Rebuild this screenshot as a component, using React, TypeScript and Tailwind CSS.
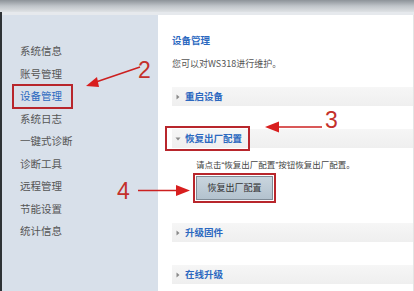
import React from "react";

const cjk = { fontFamily: '"Noto Sans CJK SC", "Noto Sans", sans-serif' };
const latin = { fontFamily: '"Liberation Sans", sans-serif' };

function Tri({ open }: { open?: boolean }) {
  return open ? (
    <svg width="6" height="6" viewBox="0 0 6 6" className="shrink-0">
      <path d="M0.5 1.5 L5.5 1.5 L3 4.5 Z" fill="#8a8a8a" />
    </svg>
  ) : (
    <svg width="6" height="6" viewBox="0 0 6 6" className="shrink-0">
      <path d="M1.5 0.5 L4.5 3 L1.5 5.5 Z" fill="#8a8a8a" />
    </svg>
  );
}

function Bar({ label, open, boxed }: { label: string; open?: boolean; boxed?: boolean }) {
  return (
    <div className="relative flex h-[19px] items-center gap-[4px] bg-gradient-to-b from-[#f6f6f6] to-[#efefef] pl-[3px]">
      <Tri open={open} />
      <span className="text-[9.5px] font-bold leading-none text-[#2b68c0]">{label}</span>
      {boxed && (
        <span className="absolute left-[-7px] top-[-3px] h-[25px] w-[85px] border-2 border-[#b8262c]" />
      )}
    </div>
  );
}

const items = ["系统信息", "账号管理", "设备管理", "系统日志", "一键式诊断", "诊断工具", "远程管理", "节能设置", "统计信息"];

export default function App() {
  return (
    <div className="relative h-[291px] w-[414px] overflow-hidden bg-white" style={cjk}>
      <div className="h-[12px] bg-gradient-to-b from-[#8d9399] via-[#bfc4c9] to-[#dfe2e5]" />
      <div className="flex h-[279px]">
        <div className="w-[2px] bg-[#2e3236]" />
        <div className="flex w-[156px] flex-col bg-[#d8e0ea]">
          <div className="h-[3px] bg-[#e6e9ed]" />
          <div className="flex flex-col pt-[25px]">
            {items.map((t) => (
              <div
                key={t}
                className={`relative h-[22.5px] pl-[18px] text-[10.5px] leading-[22.5px] ${
                  t === "设备管理" ? "text-[#2b68c0]" : "text-[#555]"
                }`}
              >
                {t}
                {t === "设备管理" && (
                  <span className="absolute left-[10px] top-[-1px] h-[25px] w-[61px] border-2 border-[#b8262c]" />
                )}
              </div>
            ))}
          </div>
        </div>
        <div className="flex flex-1 flex-col">
          <div className="h-[3px] bg-[#e6e9ed]" />
          <div className="flex flex-1 flex-col border-r border-[#e4e4e4] pl-[14px] pt-[17px]">
            <div className="h-[16px] text-[9.5px] font-bold leading-[16px] text-[#2b68c0]">设备管理</div>
            <div className="mt-[8px] h-[16px] text-[9px] leading-[16px] text-[#555]">您可以对WS318进行维护。</div>
            <div className="mt-[15px]">
              <Bar label="重启设备" />
            </div>
            <div className="mt-[23px]">
              <Bar label="恢复出厂配置" open boxed />
            </div>
            <div className="mt-[8px] h-[16px] pl-[24px] text-[8.5px] leading-[16px] text-[#444]">
              请点击<span style={latin}>“</span>恢复出厂配置<span style={latin}>”</span>按钮恢复出厂配置。
            </div>
            <div className="mt-[4px] pl-[24px]">
              <div className="flex h-[24px] w-[77px] items-center justify-center border border-[#7f8b96] bg-gradient-to-b from-[#c9d5de] to-[#b3c2ce] text-[9px] text-[#333] outline-2 outline-offset-[1px] outline-[#b8262c]">
                恢复出厂配置
              </div>
            </div>
            <div className="mt-[23px]">
              <Bar label="升级固件" />
            </div>
            <div className="mt-[23px]">
              <Bar label="在线升级" />
            </div>
          </div>
        </div>
      </div>

      {/* annotations */}
      <svg className="pointer-events-none absolute left-0 top-0" width="414" height="291">
        <line x1="140" y1="67" x2="96" y2="82" stroke="#cc2020" strokeWidth="1.6" />
        <path d="M86 86 L97 77 L99 87 Z" fill="#d81e1e" />
        <line x1="322" y1="127" x2="276" y2="127" stroke="#cc2020" strokeWidth="1.6" />
        <path d="M265 127 L279 121.5 L279 132.5 Z" fill="#d81e1e" />
        <line x1="138" y1="190.5" x2="178" y2="190.5" stroke="#cc2020" strokeWidth="1.6" />
        <path d="M190 190.5 L176 185 L176 196 Z" fill="#d81e1e" />
      </svg>
      <span className="absolute left-[138px] top-[59px] text-[23px] leading-none text-[#c4302b]" style={latin}>
        2
      </span>
      <span className="absolute left-[325px] top-[109px] text-[23px] leading-none text-[#c4302b]" style={latin}>
        3
      </span>
      <span className="absolute left-[117px] top-[180px] text-[23px] leading-none text-[#c4302b]" style={latin}>
        4
      </span>
    </div>
  );
}
